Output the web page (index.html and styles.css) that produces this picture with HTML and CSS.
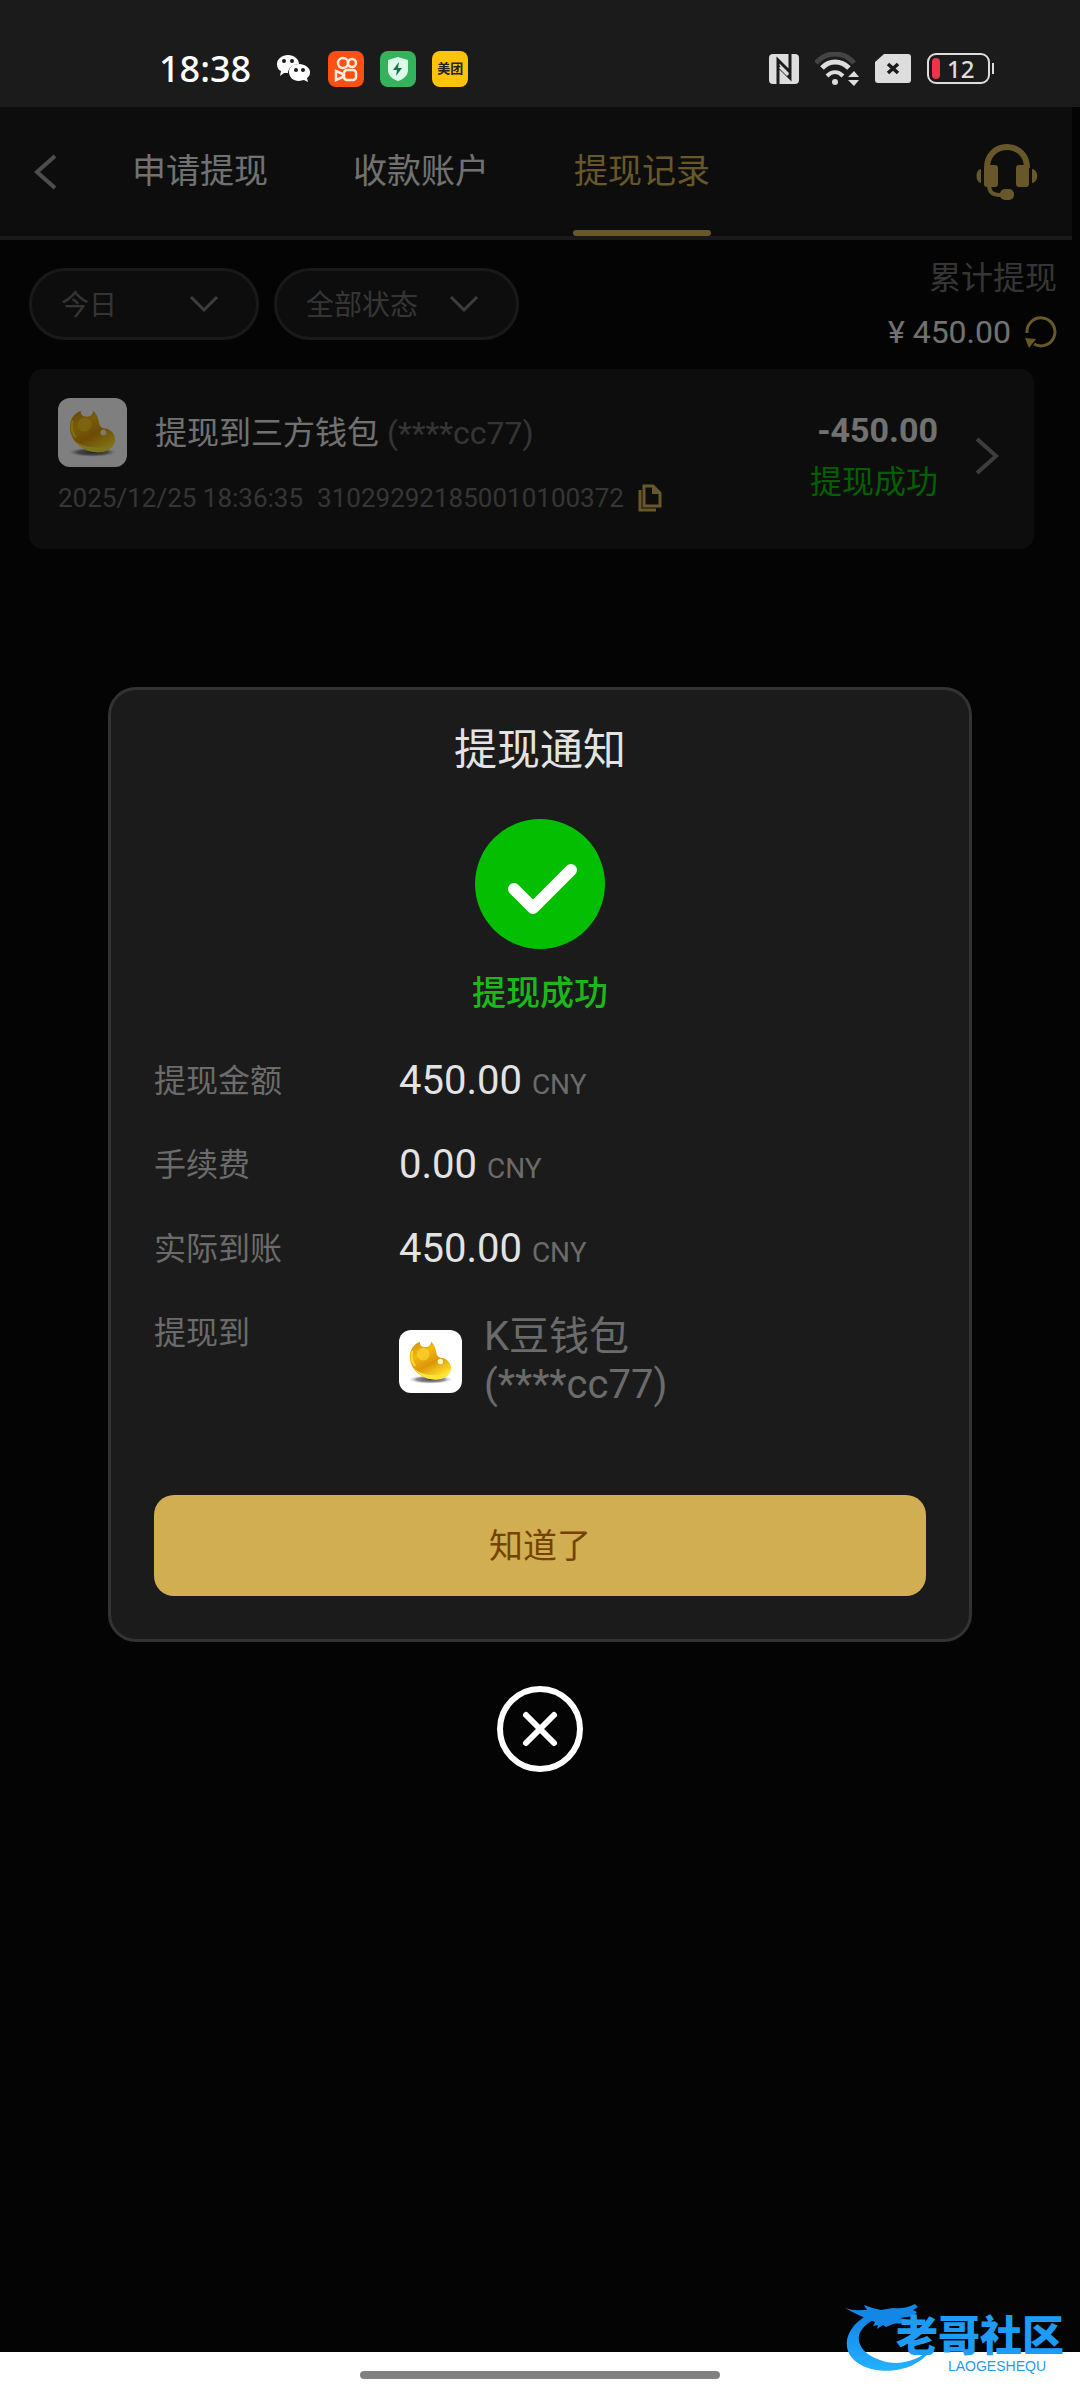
FILE: index.html
```html
<!DOCTYPE html>
<html lang="zh-CN">
<head>
  <meta charset="UTF-8">
  <meta name="viewport" content="width=device-width, initial-scale=1.0">
  <title>提现记录</title>
  <link rel="stylesheet" href="styles.css">
</head>
<body>

<!-- shared bean wallet logo -->
<svg class="defs" width="0" height="0" aria-hidden="true">
  <defs>
    <linearGradient id="gold" x1="0" y1="0" x2="0.6" y2="1">
      <stop offset="0" stop-color="#c98a10"/>
      <stop offset="0.35" stop-color="#f2b90f"/>
      <stop offset="0.65" stop-color="#dd960a"/>
      <stop offset="1" stop-color="#ffe22e"/>
    </linearGradient>
    <radialGradient id="shade">
      <stop offset="0" stop-color="#444"/>
      <stop offset="0.6" stop-color="#777" stop-opacity="0.8"/>
      <stop offset="1" stop-color="#fff" stop-opacity="0"/>
    </radialGradient>
    <symbol id="bean" viewBox="0 0 70 70">
      <rect width="70" height="70" fill="#fff"/>
      <ellipse cx="35" cy="55" rx="26" ry="5" fill="url(#shade)"/>
      <path d="M23 13c0 4 2 6 6 6s6-2 7-6c4 4 5 9 6 14 1 3 3 4 6 4 6 1 10 6 10 12-1 7-8 12-17 12C25 55 12 43 12 30c0-8 4-14 11-17z" fill="url(#gold)"/>
      <path d="M17 43c6 5 13 7 21 7 8 1 15-1 19-5-2 7-9 10-17 10-10 0-18-5-23-12z" fill="#ffe43a"/>
      <circle cx="27" cy="27" r="7" fill="#ffd733" opacity="0.6"/>
      <circle cx="46" cy="35" r="3" fill="#fff6c8"/>
      <path d="M15 23c-2 6-1 12 3 17" fill="none" stroke="#ffd93b" stroke-width="2"/>
    </symbol>
  </defs>
</svg>

<div class="status-bar">
  <span class="clock">18:38</span>
  <svg class="wechat" viewBox="0 0 33 28" width="33" height="28">
    <path d="M11 0c6 0 11 4 11 9-6 0-11 4-11 9l-4 0-4 3 1-5C1 15 0 12 0 9 0 4 5 0 11 0z" fill="#fff"/>
    <path d="M22 9c6 0 11 4 11 8 0 3-1 5-3 6l1 4-4-2-5 1c-6 0-10-4-10-9s4-8 10-8z" fill="#fff"/>
    <g fill="#1b1b1b"><circle cx="7" cy="6" r="2"/><circle cx="15" cy="6" r="2"/><circle cx="19" cy="15" r="2"/><circle cx="26" cy="15" r="2"/></g>
  </svg>
  <svg viewBox="0 0 36 36" width="36" height="36">
    <rect width="36" height="36" rx="8" fill="#fb4f14"/>
    <g fill="none" stroke="#ffeedd" stroke-width="2.5">
      <circle cx="15" cy="12" r="5"/><circle cx="24" cy="12" r="4"/>
      <rect x="16" y="19" width="12" height="10" rx="3"/>
      <path d="M8 20l7 3v3l-7 3z"/>
    </g>
  </svg>
  <svg viewBox="0 0 36 36" width="36" height="36">
    <rect width="36" height="36" rx="8" fill="#35b35c"/>
    <path d="M18 6l10 3v10c0 5-4 9-10 11C12 28 8 24 8 19V9z" fill="#dcfbea"/>
    <path d="M19 11l-6 8h4l-1 6 6-8h-4z" fill="#1d6f45"/>
  </svg>
  <span class="meituan">美团</span>

  <svg class="status-right" viewBox="0 0 30 30" width="30" height="30">
    <rect width="30" height="30" rx="4" fill="#ddd"/>
    <path d="M9 30V6l12 12M21 0v24L9 12" fill="none" stroke="#1b1b1b" stroke-width="3"/>
    <path d="M11 13l8 8" stroke="#ddd" stroke-width="3"/>
  </svg>
  <svg viewBox="0 0 44 34" width="44" height="34">
    <path d="M1 11C11-1 29-1 39 11" fill="none" stroke="#444" stroke-width="5"/>
    <path d="M7 16c7-8 19-8 27 0" fill="none" stroke="#ddd" stroke-width="5"/>
    <path d="M12 24c5-5 11-5 16 0" fill="none" stroke="#ddd" stroke-width="4"/>
    <circle cx="20" cy="30" r="3" fill="#ddd"/>
    <path d="M33 25h11l-5-6zM33 28h11l-5 6z" fill="#ddd"/>
  </svg>
  <svg viewBox="0 0 36 30" width="36" height="30">
    <path d="M9 0h24a3 3 0 0 1 3 3v23a3 3 0 0 1-3 3H3a3 3 0 0 1-3-3V8z" fill="#ddd"/>
    <path d="M13 10l10 9M23 10l-10 9" stroke="#1b1b1b" stroke-width="3.5"/>
  </svg>
  <div class="battery"><span class="level"></span>12</div>
</div>

<div class="app">
  <div class="page">
    <header class="header">
      <button class="plain" aria-label="返回">
        <svg viewBox="0 0 24 36" width="24" height="36"><path d="M21 2L3 18l18 16" fill="none" stroke="#9a9a9a" stroke-width="4"/></svg>
      </button>
      <nav class="tabs">
        <a href="#apply">申请提现</a>
        <a href="#account">收款账户</a>
        <a href="#records" class="active">提现记录</a>
      </nav>
      <button class="plain" aria-label="客服">
        <svg viewBox="0 0 62 56" width="62" height="56" fill="#d1ae52">
          <path d="M11 24C11 12 19 3 31 3s20 9 20 21" fill="none" stroke="#d1ae52" stroke-width="6"/>
          <rect x="8" y="21" width="14" height="22" rx="3"/>
          <rect x="40" y="21" width="13" height="22" rx="3"/>
          <path d="M5 25v14c-6-1-6-13 0-14zM56 25v14c7-1 7-13 0-14z"/>
          <path d="M13 42c1 8 5 9 13 9" fill="none" stroke="#d1ae52" stroke-width="4"/>
          <rect x="24" y="45" width="14" height="11" rx="5"/>
        </svg>
      </button>
    </header>

    <div class="toolbar">
      <label class="filter filter-date">
        <select aria-label="日期"><option>今日</option></select>
        <svg viewBox="0 0 30 18" width="30" height="18"><path d="M2 2l13 13L28 2" fill="none" stroke="#7a7a7a" stroke-width="3"/></svg>
      </label>
      <label class="filter filter-state">
        <select aria-label="状态"><option>全部状态</option></select>
        <svg viewBox="0 0 30 18" width="30" height="18"><path d="M2 2l13 13L28 2" fill="none" stroke="#7a7a7a" stroke-width="3"/></svg>
      </label>
      <div class="summary">
        <div class="summary-label">累计提现</div>
        <div class="summary-total">
          <span>¥ 450.00</span>
          <button class="plain" aria-label="刷新">
            <svg viewBox="0 0 32 34" width="32" height="34"><path d="M2 18a14 14 0 1 1 7 11" fill="none" stroke="#d1ae52" stroke-width="3"/><path d="M0 23l11 1-7 9z" fill="#d1ae52"/></svg>
          </button>
        </div>
      </div>
    </div>

    <div class="record">
      <div class="record-main">
        <div class="record-title">
          <svg class="wallet" width="69" height="69"><use href="#bean"/></svg>
          <span>提现到三方钱包 <span class="muted">(****cc77)</span></span>
        </div>
        <div class="record-meta">
          <span>2025/12/25 18:36:35</span>
          <span>310292921850010100372</span>
          <button class="plain" aria-label="复制">
            <svg viewBox="0 0 24 28" width="24" height="28"><path d="M6 2h9l7 7v13H6zM2 6v20h16" fill="none" stroke="#d1ae52" stroke-width="3"/><path d="M14 2v8h8z" fill="#d1ae52"/></svg>
          </button>
        </div>
      </div>
      <div class="record-amount">
        <strong>-450.00</strong>
        <span class="success">提现成功</span>
      </div>
      <svg viewBox="0 0 24 38" width="24" height="38"><path d="M2 2l19 17L2 36" fill="none" stroke="#7a7a7a" stroke-width="4"/></svg>
    </div>
  </div>

  <div class="overlay">
    <div class="modal" role="dialog" aria-labelledby="noticeTitle">
      <h2 id="noticeTitle">提现通知</h2>
      <svg class="check" viewBox="0 0 130 130" width="130" height="130">
        <circle cx="65" cy="65" r="65" fill="#04be02"/>
        <path d="M39 70l19 19 38-38" fill="none" stroke="#fff" stroke-width="12" stroke-linecap="round" stroke-linejoin="round"/>
      </svg>
      <p class="result">提现成功</p>
      <dl class="details">
        <dt>提现金额</dt>
        <dd>450.00 <small>CNY</small></dd>
        <dt>手续费</dt>
        <dd>0.00 <small>CNY</small></dd>
        <dt>实际到账</dt>
        <dd>450.00 <small>CNY</small></dd>
        <dt>提现到</dt>
        <dd class="target">
          <svg class="wallet" width="63" height="63"><use href="#bean"/></svg>
          <span>K豆钱包<br>(****cc77)</span>
        </dd>
      </dl>
      <button class="confirm">知道了</button>
    </div>
    <button class="plain" aria-label="关闭">
      <svg viewBox="0 0 86 86" width="86" height="86" fill="none" stroke="#fff" stroke-width="6">
        <circle cx="43" cy="43" r="40"/>
        <path d="M29 29l28 28M57 29L29 57" stroke-linecap="round"/>
      </svg>
    </button>
  </div>
</div>

<div class="gesture-bar"><span></span></div>

<div class="watermark">
  <svg viewBox="0 0 90 70" width="90" height="70">
    <defs>
      <linearGradient id="blue" x1="0" y1="0" x2="0" y2="1">
        <stop offset="0" stop-color="#0f7fe8"/>
        <stop offset="1" stop-color="#25b1ff"/>
      </linearGradient>
    </defs>
    <path d="M40 6C14 9-3 30 3 47c8 24 64 30 85-4-14 14-36 20-53 13C14 49 9 34 18 24c6-7 14-11 24-12z" fill="url(#blue)"/>
    <path d="M0 4c8 3 15 2 22 2l-3-5c6 2 11 4 17 5l12-2c8 1 14 0 22-4l3 3-5 3 4 2-3 4-14 2 13 3-2 3c-8 0-12-1-18 0l-7 3-3-2-6 4 1-4-5 1 2-4C18 13 8 9 0 4z" fill="#1387e6"/>
  </svg>
  <div class="watermark-text">
    <b>老哥社区</b>
    <small>LAOGESHEQU</small>
  </div>
</div>

</body>
</html>
```
FILE: styles.css
```css
* {
  box-sizing: border-box;
}
body {
  margin: 0;
  min-height: 100vh;
  display: flex;
  flex-direction: column;
  position: relative;
  background-color: #080808;
  color: #e3e3e3;
  font-family: Roboto, "Noto Sans CJK SC", sans-serif;
  font-size: 32px;
}
svg {
  display: block;
  flex-shrink: 0;
}
.defs {
  position: absolute;
}
.plain {
  padding: 0;
  border: 0;
  background: none;
  cursor: pointer;
}

/* phone status bar */
.status-bar {
  height: 107px;
  display: flex;
  align-items: center;
  gap: 16px;
  padding: 30px 90px 0 159px;
  background-color: #1b1b1b;
}
.clock {
  color: #fff;
  font: 500 36px/48px "Noto Sans", sans-serif;
  margin-right: 10px;
}
.wechat {
  margin-right: 2px;
}
.meituan {
  width: 36px;
  height: 36px;
  border-radius: 8px;
  background-color: #fbc30a;
  color: #222;
  font-size: 13px;
  font-weight: 700;
  line-height: 36px;
  text-align: center;
}
.status-right {
  margin-left: auto;
}
.battery {
  width: 63px;
  height: 31px;
  display: flex;
  align-items: center;
  gap: 7px;
  padding-left: 3px;
  position: relative;
  border: 2px solid #ddd;
  border-radius: 9px;
  color: #ddd;
  font: 500 24px/24px "Noto Sans", sans-serif;
}
.battery::after {
  content: "";
  position: absolute;
  right: -6px;
  top: 8px;
  width: 2px;
  height: 11px;
  background-color: #ddd;
}
.level {
  width: 8px;
  height: 21px;
  border-radius: 4px;
  background-color: #ef3349;
}

/* page under the overlay */
.app {
  flex: 1;
  position: relative;
}
.page {
  padding-right: 8px;
}
.header {
  height: 133px;
  display: flex;
  align-items: center;
  padding: 0 34px;
  background-color: #1b1b1b;
  border-bottom: 4px solid #333;
}
.tabs {
  flex: 1;
  align-self: stretch;
  display: flex;
  gap: 83px;
  margin-left: 73px;
}
.tabs a {
  position: relative;
  padding: 0 1px;
  color: #e3e3e3;
  font-size: 34px;
  line-height: 128px;
  text-decoration: none;
}
.tabs .active {
  color: #d1ae52;
}
.tabs .active::after {
  content: "";
  position: absolute;
  left: 0;
  right: 0;
  bottom: 0;
  height: 6px;
  border-radius: 3px;
  background-color: #d1ae52;
}
.toolbar {
  display: flex;
  gap: 15px;
  padding: 18px 15px 0 29px;
}
.filter {
  height: 72px;
  margin-top: 10px;
  padding: 0 37px 0 29px;
  display: flex;
  align-items: center;
  justify-content: space-between;
  background-color: #1b1b1b;
  border: 3px solid #333;
  border-radius: 36px;
}
.filter-date {
  width: 230px;
}
.filter-state {
  width: 245px;
}
.filter select {
  flex: 1;
  padding: 4px 0 0;
  border: 0;
  appearance: none;
  background: none;
  color: #6b6b6b;
  font-family: inherit;
  font-size: 28px;
  line-height: 40px;
}
.summary {
  margin-left: auto;
  text-align: right;
  line-height: 40px;
}
.summary-label {
  color: #6b6b6b;
}
.summary-total {
  display: flex;
  align-items: center;
  gap: 14px;
  margin-top: 14px;
}
.record {
  display: flex;
  align-items: center;
  margin: 17px 38px 0 29px;
  padding: 29px 35px 36px 29px;
  background-color: #1b1b1b;
  border-radius: 14px;
}
.record-main {
  flex: 1;
}
.wallet {
  border-radius: 12px;
}
.record-title {
  display: flex;
  align-items: center;
  gap: 28px;
  line-height: 44px;
}
.muted {
  color: #6b6b6b;
}
.record-meta {
  display: flex;
  align-items: center;
  gap: 14px;
  margin-top: 16px;
  color: #6b6b6b;
  font-size: 26px;
  line-height: 30px;
}
.record-amount {
  display: flex;
  flex-direction: column;
  gap: 8px;
  margin-right: 37px;
  text-align: right;
  line-height: 44px;
}
.record-amount strong {
  font-size: 34px;
}
.success {
  color: #04be02;
}

/* notice dialog */
.overlay {
  position: absolute;
  inset: 0;
  display: flex;
  flex-direction: column;
  align-items: center;
  justify-content: center;
  gap: 44px;
  background-color: rgba(0, 0, 0, 0.5);
}
.modal {
  width: 80%;
  padding: 30px 43px 43px;
  display: flex;
  flex-direction: column;
  background-color: #1b1b1b;
  border: 3px solid #333;
  border-radius: 28px;
}
.modal h2 {
  margin: 0;
  font-size: 43px;
  font-weight: 400;
  line-height: 60px;
  text-align: center;
}
.check {
  margin: 39px auto 0;
}
.result {
  margin: 22px 0 24px;
  color: #1ab91a;
  font-size: 34px;
  font-weight: 500;
  line-height: 44px;
  text-align: center;
}
.details {
  display: grid;
  grid-template-columns: 245px 1fr;
  grid-auto-rows: 84px;
  margin: 0 0 120px;
  line-height: 84px;
}
.details dt {
  color: #6b6b6b;
}
.details dd {
  margin: 0;
  font-size: 40px;
}
.details small {
  color: #6b6b6b;
  font-size: 28px;
  line-height: 28px;
}
.details .target {
  display: flex;
  align-items: center;
  align-self: start;
  gap: 22px;
  padding-top: 22px;
  color: #6b6b6b;
  line-height: 48px;
}
.confirm {
  height: 101px;
  padding: 0 0 4px;
  border: 0;
  border-radius: 20px;
  background-color: #d1ae52;
  color: #744301;
  font-family: inherit;
  font-size: 34px;
  cursor: pointer;
}

.gesture-bar {
  height: 48px;
  display: flex;
  align-items: center;
  justify-content: center;
  padding-bottom: 2px;
  background-color: #fff;
}
.gesture-bar span {
  width: 360px;
  height: 8px;
  border-radius: 4px;
  background-color: #808080;
}

/* site logo over the bottom corner */
.watermark {
  position: absolute;
  right: 16px;
  bottom: 26px;
  display: flex;
  align-items: flex-end;
  color: #1e9bf5;
}
.watermark-text {
  display: flex;
  flex-direction: column;
  align-items: flex-end;
  margin-left: -39px;
}
.watermark b {
  font-size: 42px;
  font-weight: 900;
  line-height: 44px;
}
.watermark small {
  margin-right: 18px;
  font-family: "Liberation Sans", sans-serif;
  font-size: 14px;
  line-height: 15px;
}
```
